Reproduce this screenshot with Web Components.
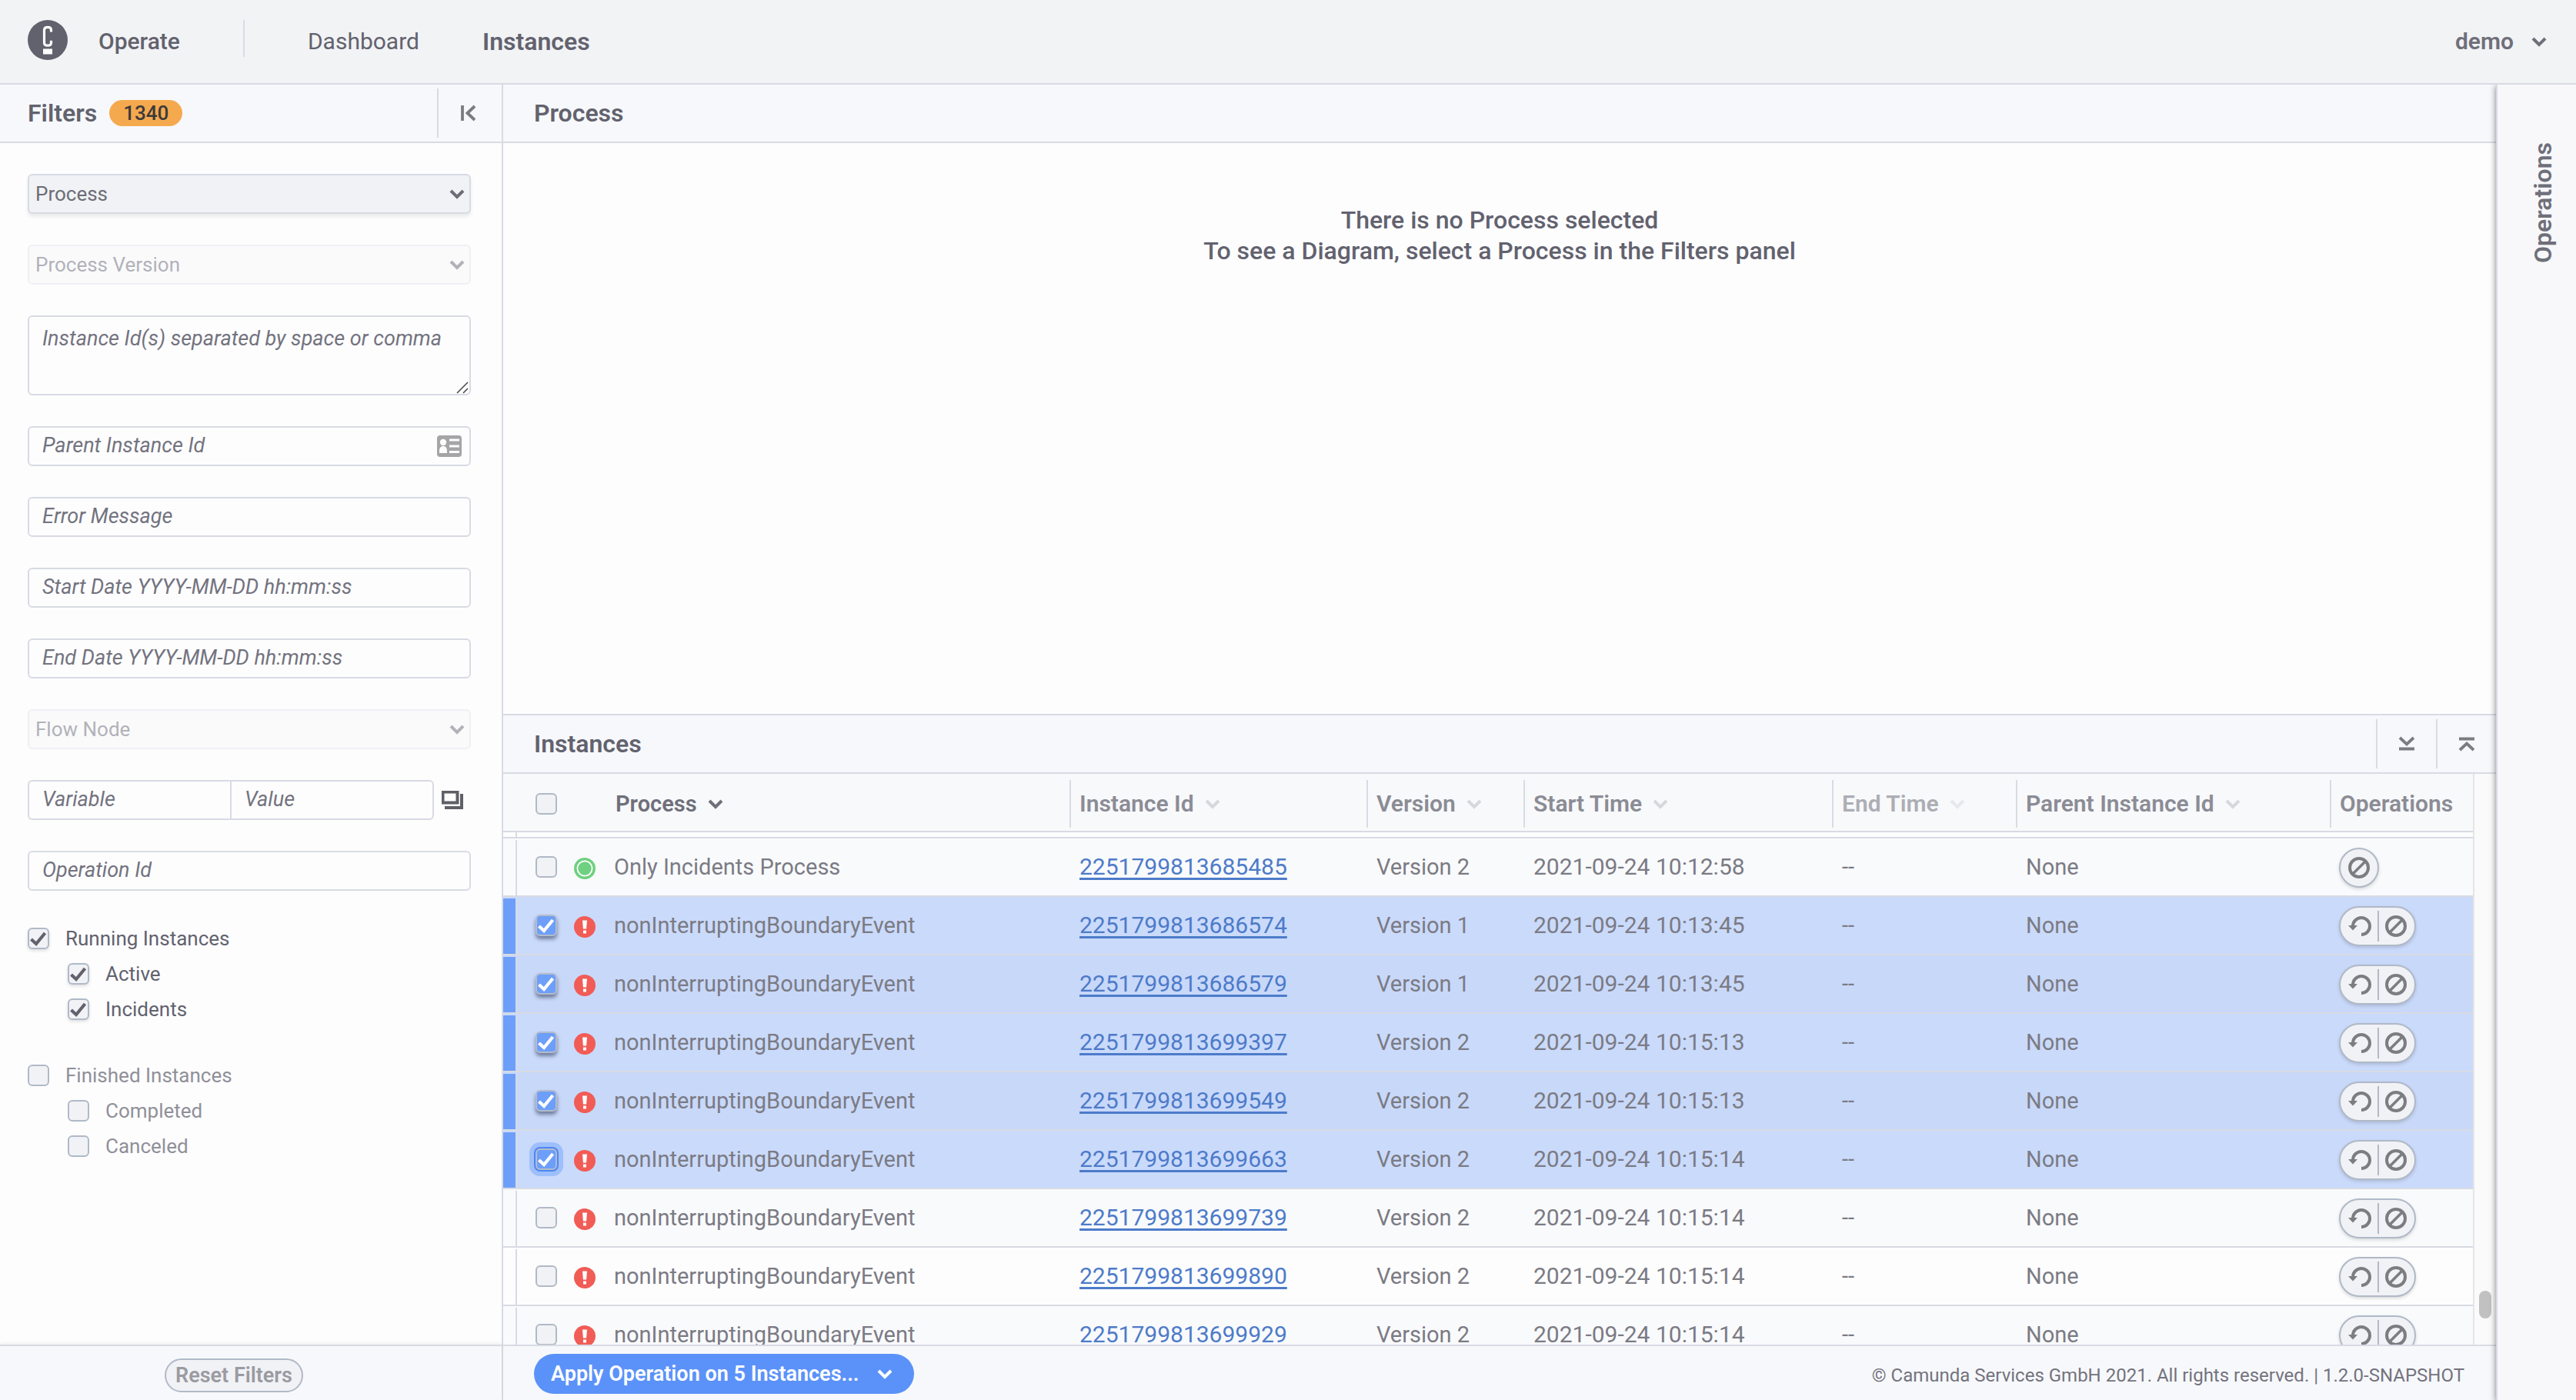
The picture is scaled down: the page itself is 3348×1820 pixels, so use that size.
<!DOCTYPE html>
<html lang="en">
<head>
<meta charset="utf-8">
<title>Operate: Instances</title>
<style>
  :root {
    --text: #62626e;
    --text-soft: #7b7b84;
    --line: #d8dbe3;
    --control-line: #b0b9c7;
    --bar: #f7f8fb;
    --page: #fdfdfe;
    --control: #f1f2f5;
    --blue: #5b92f9;
    --s-small: 24px;
    --s-field: 26px;
    --s-italic: 27px;
    --s-cell: 29px;
    --s-number: 30px;
    --s-title: 32px;
  }
  html, body { height: 100%; margin: 0; }
  body { font-family: Roboto, "Liberation Sans", sans-serif; color: var(--text); background: var(--page); overflow: hidden; }
</style>
</head>
<body>
<operate-app></operate-app>

<script>
const define = (name, html, setup) => customElements.define(name, class extends HTMLElement {
  connectedCallback() {
    if (this.shadowRoot) return;
    const root = this.attachShadow({ mode: 'open' });
    const t = document.createElement('template');
    t.innerHTML = '<style>*{box-sizing:border-box}:host{box-sizing:border-box}:host([hidden]){display:none}button,input,select,textarea{font:inherit;color:inherit;margin:0}button{cursor:pointer}svg{display:block}</style>' + (typeof html === 'function' ? html(this) : html);
    root.append(t.content.cloneNode(true));
    if (setup) setup(this, root);
  }
});

/* Icons */
const ICONS = {
  down: [20, 14, '<path d="M2 3l8 8 8-8" fill="none" stroke="currentColor" stroke-width="4"/>'],
  collapse: [20, 22, '<path d="M2 1v20" stroke="currentColor" stroke-width="3.8" fill="none"/><path d="M18 2l-9.500 9 9.500 9" fill="none" stroke="currentColor" stroke-width="3.800"/>'],
  toBottom: [22, 20, '<path d="M2 2l9 8.500L20 2" fill="none" stroke="currentColor" stroke-width="3.800"/><path d="M1 16.500h20" stroke="currentColor" stroke-width="4"/>'],
  toTop: [22, 20, '<path d="M2 18l9-8.500 9 8.500" fill="none" stroke="currentColor" stroke-width="3.800"/><path d="M1 3.500h20" stroke="currentColor" stroke-width="4"/>'],
  stack: [28, 24, '<path d="M1.500 1.500h19v14h-19z" fill="none" stroke="currentColor" stroke-width="4"/><path d="M4 22h22V4" fill="none" stroke="currentColor" stroke-width="4"/>'],
  card: [32, 28, '<rect width="32" height="28" rx="4" fill="currentColor"/><g fill="#fdfdfe"><circle cx="8" cy="9" r="4.200"/><path d="M3 23v-3c0-4 2-6 5-6s5 2 5 6v3z"/><path d="M16 4.500h13v3H16zM16 12.500h13v3H16zM16 20h13v3H16z"/></g>'],
  cancel: [28, 28, '<circle cx="14" cy="14" r="12" fill="none" stroke="currentColor" stroke-width="4"/><path d="M6 22L22 6" stroke="currentColor" stroke-width="3.600"/>'],
  retry: [30, 28, '<path d="M6 14a11 11 0 1 1 11 11" fill="none" stroke="currentColor" stroke-width="4"/><path d="M0 13h12l-6 6.500z" fill="currentColor"/>'],
  active: [28, 28, '<circle cx="14" cy="14" r="14" fill="#6fd081"/><circle cx="14" cy="14" r="9.600" fill="none" stroke="#fff" stroke-width="1.800"/>'],
  incident: [28, 28, '<circle cx="14" cy="14" r="14" fill="#f15c56"/><path d="M11 5.500h6l-.9 11h-4.200z" fill="#fff"/><rect x="12" y="18.500" width="4" height="4" fill="#fff"/>'],
  check: [24, 24, '<path d="M2.500 13l6.500 6L20.500 5" fill="none" stroke="currentColor" stroke-width="4.200"/>'],
  logo: [52, 52, '<circle cx="26" cy="26" r="26" fill="#62626e"/><path d="M30.500 15.500v-2.300c0-2.300-1.500-3.800-4.500-3.800s-4.500 1.500-4.500 3.800v16.200c0 2.300 1.500 3.800 4.500 3.800s4.500-1.500 4.500-3.800v-2.600" fill="none" stroke="#fff" stroke-width="3.200"/><rect x="20" y="37.500" width="12" height="7" fill="#fff"/>']
};
define('op-icon', el => {
  const [w, h, body] = ICONS[el.getAttribute('name')];
  return `<style>:host{display:block;flex:none;width:${w}px;height:${h}px}</style><svg width="${w}" height="${h}" viewBox="0 0 ${w} ${h}" aria-hidden="true">${body}</svg>`;
});

/* Tick box with optional label text */
define('check-box', el => `
<style>
  :host { display: block; }
  label { display: flex; align-items: center; gap: 21px; height: 28px; font-size: var(--s-field); line-height: 28px; }
  .box { position: relative; flex: none; width: 28px; height: 28px; }
  input { appearance: none; display: block; width: 28px; height: 28px; border: 2px solid var(--control-line); border-radius: 6px; background: var(--control); outline: none; }
  op-icon { position: absolute; left: 2px; top: 2px; pointer-events: none; display: none; }
  input:checked + op-icon { display: block; }
  input:checked { box-shadow: 0 2px 4px rgba(0,0,0,.12); }
  span.off { opacity: .7; }
  :host([row]) input:checked { background: #6d9ffa; border-color: #b3bccb; box-shadow: 0 4px 5px rgba(40,50,80,.55); }
  :host([row]) op-icon { color: #fff; }
  :host([focused]) input:checked { box-shadow: 0 0 0 2px #4d86f5, 0 0 0 8px #9dbffb; }
</style>
<label><span class="box"><input type="checkbox" ${el.hasAttribute('checked') ? 'checked' : ''} ${el.getAttribute('name') ? `aria-label="${el.getAttribute('name')}"` : ''}><op-icon name="check"></op-icon></span>${el.textContent ? `<span class="${el.hasAttribute('checked') ? '' : 'off'}"><slot></slot></span>` : ''}</label>`);

/* Filter controls */
define('filter-select', el => `
<style>
  :host { display: block; position: relative; height: 52px; font-size: var(--s-field); }
  select { appearance: none; display: block; width: 100%; height: 52px; padding: 0 50px 0 8px; border: 2px solid var(--line); border-radius: 6px; background: var(--control); color: #6c6d75; opacity: 1; box-shadow: 0 4px 4px rgba(0,0,0,.07); }
  op-icon { position: absolute; right: 8px; top: 19px; color: #6c6d75; pointer-events: none; }
  :host([disabled]) select { background: #fafafb; border-color: #eff0f4; color: #b2b2b9; box-shadow: none; }
  :host([disabled]) op-icon { color: #b2b2b9; }
</style>
<select aria-label="${el.getAttribute('label')}" ${el.hasAttribute('disabled') ? 'disabled' : ''}><option>${el.getAttribute('label')}</option></select><op-icon name="down"></op-icon>`);

const FIELD = `
  input, textarea { display: block; width: 100%; height: 52px; padding: 0 17px 2px; border: 2px solid var(--line); border-radius: 6px; background: var(--page); font-size: var(--s-italic); outline: none; }
  ::placeholder { font-style: italic; color: #73737e; opacity: 1; }`;
define('filter-input', el => `
<style>${FIELD}
  :host { display: block; position: relative; }
  op-icon { position: absolute; right: 12px; top: 12px; color: #a5a5a7; }
</style>
<input type="text" placeholder="${el.getAttribute('label')}" aria-label="${el.getAttribute('label')}">${el.hasAttribute('icon') ? `<op-icon name="${el.getAttribute('icon')}"></op-icon>` : ''}`);
define('filter-area', el => `
<style>${FIELD}
  :host { display: block; position: relative; }
  textarea { height: 104px; padding: 10px 17px; line-height: 36px; resize: none; overflow: hidden; }
  svg { position: absolute; right: 3px; bottom: 2px; pointer-events: none; }
</style>
<textarea placeholder="${el.getAttribute('label')}" aria-label="${el.getAttribute('label')}"></textarea>
<svg width="16" height="16" viewBox="0 0 16 16" aria-hidden="true"><path d="M1 15L15 1M9 15l6-6" stroke="#4a4a4c" stroke-width="1.500"/></svg>`);
define('filter-variable', `
<style>${FIELD}
  :host { display: flex; align-items: center; gap: 10px; padding-right: 10px; }
  .pair { flex: 1; display: flex; }
  input { flex: 1 1 0; min-width: 0; }
  input:first-child { border-radius: 6px 0 0 6px; border-right: 0; }
  input:last-child { border-radius: 0 6px 6px 0; }
  button { padding: 0; border: 0; background: none; color: #5f5f67; }
</style>
<div class="pair"><input type="text" placeholder="Variable" aria-label="Variable"><input type="text" placeholder="Value" aria-label="Value"></div>
<button type="button" aria-label="Open variable editor"><op-icon name="stack"></op-icon></button>`);

/* Bar on top of each panel */
define('panel-bar', `
<style>
  :host { display: flex; align-items: center; flex: none; height: 76px; border-bottom: 2px solid var(--line); background: var(--bar); }
  h2 { margin: 0; padding-left: var(--inset, 40px); font-size: var(--s-title); line-height: 36px; font-weight: 600; }
  .extra { flex: 1; display: flex; align-items: center; align-self: stretch; }
</style>
<h2><slot></slot></h2><div class="extra"><slot name="extra"></slot></div>`);
define('bar-button', el => `
<style>
  :host { display: block; height: 64px; border-left: 2px solid var(--line); }
  button { display: flex; align-items: center; justify-content: center; width: 100%; height: 100%; padding: 0; border: 0; background: none; color: #7b7c83; }
</style>
<button type="button" aria-label="${el.getAttribute('label')}"><op-icon name="${el.getAttribute('icon')}"></op-icon></button>`);

define('app-header', `
<style>
  :host { display: flex; align-items: center; flex: none; height: 110px; padding: 0 38px 0 36px; border-bottom: 2px solid var(--line); background: #f2f3f5; font-size: var(--s-number); line-height: 36px; }
  a { color: inherit; text-decoration: none; }
  .brand { display: flex; align-items: center; gap: 40px; font-weight: 500; }
  .brand op-icon { margin-bottom: 4px; }
  nav { display: flex; align-items: center; gap: 82px; padding-left: 82px; }
  .rule { width: 2px; height: 48px; margin-left: 82px; margin-bottom: 8px; background: var(--line); }
  .current { font-weight: 600; font-size: var(--s-title); }
  button { display: flex; align-items: center; gap: 23px; margin-left: auto; padding: 0; border: 0; background: none; font-weight: 600; color: #6f6f7a; }
</style>
<a class="brand" href="#operate"><op-icon name="logo"></op-icon>Operate</a>
<div class="rule"></div>
<nav><a href="#dashboard">Dashboard</a><a class="current" href="#instances" aria-current="page">Instances</a></nav>
<button type="button">demo<op-icon name="down"></op-icon></button>`);

define('filters-panel', `
<style>
  :host { display: flex; flex-direction: column; width: 654px; flex: none; border-right: 2px solid var(--line); background: var(--page); --inset: 36px; }
  .badge { margin-left: 16px; padding: 0 18px; height: 34px; border-radius: 17px; background: #f5a94e; color: #3b3a3c; font-size: var(--s-field); line-height: 35px; font-weight: 500; }
  bar-button { width: 84px; margin-left: auto; padding-right: 4px; }
  form { flex: 1; min-height: 0; display: flex; flex-direction: column; gap: 40px; padding: 40px 40px 0 36px; }
  fieldset { display: flex; flex-direction: column; gap: 18px; margin: 8px 0 0; padding: 0; border: 0; }
  fieldset + fieldset { margin-top: 18px; }
  .sub { margin-left: 52px; }
  footer { flex: none; display: flex; justify-content: center; height: 72px; padding: 16px 44px 0 0; border-top: 2px solid var(--line); background: var(--bar); box-shadow: 0 -2px 4px rgba(0,0,0,.06); }
  footer button { height: 44px; padding: 0 12px; border: 2px solid var(--control-line); border-radius: 22px; background: #f1f2f6; color: #9a9ba1; font-size: var(--s-italic); line-height: 38px; font-weight: 600; }
</style>
<panel-bar>Filters<div slot="extra" class="badge">1340</div><bar-button slot="extra" icon="collapse" label="Collapse filters"></bar-button></panel-bar>
<form>
  <filter-select label="Process"></filter-select>
  <filter-select label="Process Version" disabled></filter-select>
  <filter-area label="Instance Id(s) separated by space or comma"></filter-area>
  <filter-input label="Parent Instance Id" icon="card"></filter-input>
  <filter-input label="Error Message"></filter-input>
  <filter-input label="Start Date YYYY-MM-DD hh:mm:ss"></filter-input>
  <filter-input label="End Date YYYY-MM-DD hh:mm:ss"></filter-input>
  <filter-select label="Flow Node" disabled></filter-select>
  <filter-variable></filter-variable>
  <filter-input label="Operation Id"></filter-input>
  <fieldset><check-box checked>Running Instances</check-box><check-box class="sub" checked>Active</check-box><check-box class="sub" checked>Incidents</check-box></fieldset>
  <fieldset><check-box>Finished Instances</check-box><check-box class="sub">Completed</check-box><check-box class="sub">Canceled</check-box></fieldset>
</form>
<footer><button type="button">Reset Filters</button></footer>`);

define('process-panel', `
<style>
  :host { display: flex; flex-direction: column; flex: none; height: 818px; }
  p { margin: 0; padding-top: 80px; text-align: center; font-size: var(--s-title); line-height: 40px; font-weight: 500; }
</style>
<panel-bar>Process</panel-bar>
<p>There is no Process selected<br>To see a Diagram, select a Process in the Filters panel</p>`);

define('row-operations', el => `
<style>
  :host { display: block; }
  .pill { display: inline-flex; align-items: center; height: 52px; padding: 0 10px; border: 2px solid var(--control-line); border-radius: 26px; background: #f1f2f6; color: #7c7d81; box-shadow: 0 2px 4px rgba(0,0,0,.14); }
  button { padding: 0; border: 0; background: none; color: inherit; }
  .rule { width: 2px; height: 40px; margin: 0 8px; background: var(--control-line); }
</style>
<div class="pill">${el.hasAttribute('retry') ? '<button type="button" aria-label="Retry"><op-icon name="retry"></op-icon></button><div class="rule"></div>' : ''}<button type="button" aria-label="Cancel"><op-icon name="cancel"></op-icon></button></div>`);

const ROWS = [
  ['Only Incidents Process', '2251799813685485', 2, '10:12:58', 'active', 0],
  ['nonInterruptingBoundaryEvent', '2251799813686574', 1, '10:13:45', 'incident', 1],
  ['nonInterruptingBoundaryEvent', '2251799813686579', 1, '10:13:45', 'incident', 1],
  ['nonInterruptingBoundaryEvent', '2251799813699397', 2, '10:15:13', 'incident', 1],
  ['nonInterruptingBoundaryEvent', '2251799813699549', 2, '10:15:13', 'incident', 1],
  ['nonInterruptingBoundaryEvent', '2251799813699663', 2, '10:15:14', 'incident', 2],
  ['nonInterruptingBoundaryEvent', '2251799813699739', 2, '10:15:14', 'incident', 0],
  ['nonInterruptingBoundaryEvent', '2251799813699890', 2, '10:15:14', 'incident', 0],
  ['nonInterruptingBoundaryEvent', '2251799813699929', 2, '10:15:14', 'incident', 0]
];
const sortHead = (label, cls = '') => `<th scope="col"><div class="h ${cls}"><button type="button">${label}<op-icon name="down"></op-icon></button></div></th>`;
define('instances-table', () => `
<style>
  :host { display: flex; flex: 1; min-height: 0; overflow: hidden; background: #fafafa; }
  table { flex: 1; min-width: 0; align-self: flex-start; table-layout: fixed; border-collapse: separate; border-spacing: 0; background: var(--page); border-right: 2px solid #e4e5e9; font-size: var(--s-cell); line-height: 36px; color: var(--text-soft); }
  col.strip { width: 18px; } col.id { width: 386px; } col.version { width: 204px; } col.start { width: 401px; }
  col.end { width: 239px; } col.parent { width: 408px; } col.ops { width: 186px; }
  th, td { padding: 0; text-align: left; font-weight: 400; border-bottom: 2px solid var(--line); }
  th { height: 76px; padding-bottom: 4px; vertical-align: bottom; background: #f8f9fb; }
  .h { display: flex; align-items: center; height: 62px; padding-left: 11px; border-left: 2px solid var(--line); font-size: var(--s-number); font-weight: 600; color: #8b8c95; }
  .h button { display: flex; align-items: center; gap: 14px; padding: 0; border: 0; background: none; font-weight: 600; }
  .h button op-icon { color: #d7d8dc; }
  .h.first { border: 0; gap: 76px; padding-left: 42px; font-size: var(--s-cell); color: #6f6f7a; }
  .first button op-icon { color: #6f6f7a; }
  .h.faded { color: #adaeb4; }
  .faded button op-icon { color: #e7e8eb; }
  .gap td { height: 8px; }
  .edge { height: 6px; border-right: 2px solid var(--line); }
  td { height: 76px; }
  .row .edge { height: 72px; margin-top: 2px; }
  .row.alt { background: #f9fafc; }
  .row.on { background: #cadafb; }
  .row.on.alt { background: #c8d8f9; }
  .on .edge { background: #6d9ffa; }
  .cell { padding-left: 13px; padding-bottom: 1px; }
  .name { display: flex; align-items: center; gap: 22px; padding-left: 24px; }
  .name op-icon { margin-top: 3px; }
  .name span { margin-left: 2px; }
  .num { font-size: var(--s-number); }
  a { color: #4d7bc9; text-decoration: underline; text-decoration-thickness: 3px; text-underline-offset: 4px; text-decoration-skip-ink: none; }
  row-operations { padding-left: 12px; padding-top: 2px; }
  .track { flex: none; width: 28px; display: flex; flex-direction: column; align-items: center; justify-content: flex-end; padding-bottom: 34px; }
  .thumb { width: 16px; height: 36px; border-radius: 8px; background: #c1c1c2; }
</style>
<table>
  <colgroup><col class="strip"><col><col class="id"><col class="version"><col class="start"><col class="end"><col class="parent"><col class="ops"></colgroup>
  <thead><tr><th colspan="2" scope="col"><div class="h first"><check-box name="Select all instances"></check-box><button type="button">Process<op-icon name="down"></op-icon></button></div></th>
  ${sortHead('Instance Id')}${sortHead('Version')}${sortHead('Start Time')}${sortHead('End Time', 'faded')}${sortHead('Parent Instance Id')}<th scope="col"><div class="h">Operations</div></th></tr></thead>
  <tbody><tr class="gap"><td><div class="edge"></div></td><td colspan="7"></td></tr>
  ${ROWS.map(([name, id, version, time, state, on], i) => `<tr class="row ${on ? 'on' : ''} ${i % 2 ? '' : 'alt'}">
    <td><div class="edge"></div></td>
    <td><div class="name"><check-box row ${on ? 'checked' : ''} ${on === 2 ? 'focused' : ''} name="Select instance ${id}"></check-box><op-icon name="${state}"></op-icon><span>${name}</span></div></td>
    <td><div class="cell num"><a href="#${id}">${id}</a></div></td><td><div class="cell">Version ${version}</div></td><td><div class="cell num">2021-09-24 ${time}</div></td>
    <td><div class="cell">--</div></td><td><div class="cell">None</div></td><td><row-operations ${state === 'incident' ? 'retry' : ''}></row-operations></td></tr>`).join('')}
  </tbody>
</table>
<div class="track"><div class="thumb"></div></div>`);

define('instances-panel', `
<style>
  :host { display: flex; flex-direction: column; flex: 1; min-height: 0; border-top: 2px solid var(--line); }
  bar-button { width: 78px; }
  bar-button:first-of-type { margin-left: auto; }
  footer { flex: none; display: flex; align-items: flex-start; justify-content: space-between; height: 72px; padding: 10px 41px 0 40px; border-top: 2px solid var(--line); background: var(--bar); }
  footer button { display: flex; align-items: center; gap: 23px; height: 52px; padding: 0 28px 0 22px; border: 0; border-radius: 26px; background: var(--blue); color: #fff; font-size: var(--s-italic); font-weight: 600; }
  small { font-size: var(--s-small); line-height: 32px; color: #73737e; padding-top: 12px; }
</style>
<panel-bar>Instances<bar-button slot="extra" icon="toBottom" label="Collapse instances"></bar-button><bar-button slot="extra" icon="toTop" label="Expand instances"></bar-button></panel-bar>
<instances-table></instances-table>
<footer><button type="button">Apply Operation on 5 Instances...<op-icon name="down"></op-icon></button><small>© Camunda Services GmbH 2021. All rights reserved. | 1.2.0-SNAPSHOT</small></footer>`);

define('operations-panel', `
<style>
  :host { display: block; flex: none; width: 104px; border-left: 2px solid var(--line); background: #f8f8fb; box-shadow: 0 2px 8px rgba(0,0,0,.5); clip-path: inset(0 0 0 -16px); z-index: 1; }
  button { display: flex; align-items: center; padding: 75px 0 0 37px; border: 0; background: none; font-size: var(--s-title); line-height: 44px; font-weight: 600; color: #6f6f7a; }
  span { writing-mode: vertical-rl; transform: rotate(180deg); }
</style>
<button type="button"><span>Operations</span></button>`);

define('operate-app', `
<style>
  :host { display: flex; flex-direction: column; height: 100vh; }
  main { flex: 1; min-height: 0; display: flex; }
  .center { flex: 1; min-width: 0; display: flex; flex-direction: column; }
</style>
<app-header></app-header>
<main><filters-panel></filters-panel><div class="center"><process-panel></process-panel><instances-panel></instances-panel></div><operations-panel></operations-panel></main>`);
</script>
</body>
</html>
